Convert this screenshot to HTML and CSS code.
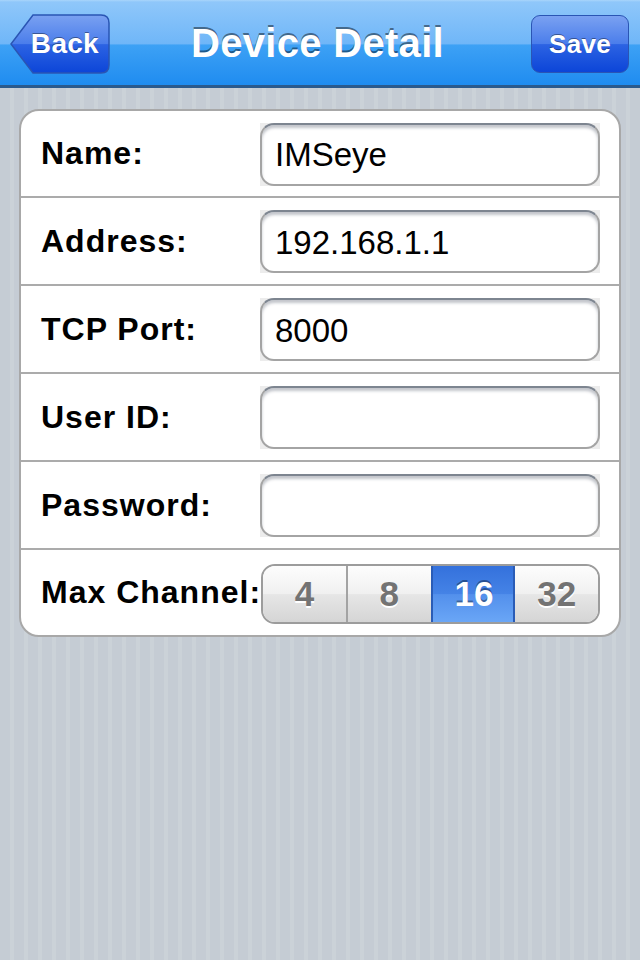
FILE: index.html
```html
<!DOCTYPE html>
<html lang="en">
<head>
    <meta charset="UTF-8">
    <meta name="viewport" content="width=device-width, initial-scale=1.0">
    <title>Device Detail</title>
    <link rel="stylesheet" href="styles.css">
</head>
<body>
    <header class="navbar">
        <button class="nav-btn back-btn">
            <svg class="back-shape" viewBox="0 0 100 60" width="100" height="60">
                <defs>
                    <linearGradient id="backGrad" x1="0" y1="0" x2="0" y2="1">
                        <stop offset="0" stop-color="#7aa1f1"/>
                        <stop offset="0.5" stop-color="#4a7deb"/>
                        <stop offset="0.51" stop-color="#2c63e3"/>
                        <stop offset="1" stop-color="#0c45d8"/>
                    </linearGradient>
                </defs>
                <path d="M23 1 H91 Q99 1 99 9 V51 Q99 59 91 59 H23 L1 30 Z" fill="url(#backGrad)" stroke="#2a55b4" stroke-width="1.5"/>
            </svg>
            <span class="back-label">Back</span>
        </button>
        <h1 class="nav-title">Device Detail</h1>
        <button class="nav-btn save-btn">Save</button>
    </header>

    <main class="content">
        <div class="card">
            <div class="row">
                <label class="row-label" for="name">Name:</label>
                <div class="field"><input type="text" id="name" value="IMSeye"></div>
            </div>
            <div class="row">
                <label class="row-label" for="address">Address:</label>
                <div class="field"><input type="text" id="address" value="192.168.1.1"></div>
            </div>
            <div class="row">
                <label class="row-label" for="port">TCP Port:</label>
                <div class="field"><input type="text" id="port" value="8000"></div>
            </div>
            <div class="row">
                <label class="row-label" for="userId">User ID:</label>
                <div class="field"><input type="text" id="userId" value=""></div>
            </div>
            <div class="row">
                <label class="row-label" for="password">Password:</label>
                <div class="field"><input type="password" id="password" value=""></div>
            </div>
            <div class="row">
                <span class="row-label">Max Channel:</span>
                <div class="segmented">
                    <button class="segment">4</button>
                    <button class="segment">8</button>
                    <button class="segment selected">16</button>
                    <button class="segment">32</button>
                </div>
            </div>
        </div>
    </main>
</body>
</html>
```

FILE: styles.css
```css
* {
    margin: 0;
    padding: 0;
    box-sizing: border-box;
}

body {
    font-family: "Liberation Sans", Arial, sans-serif;
    background: repeating-linear-gradient(90deg, #c5ccd4 0, #c5ccd4 10px, #cbd2d8 10px, #cbd2d8 14px);
    min-height: 100vh;
}

/* Верхняя панель */
.navbar {
    height: 88px;
    display: flex;
    align-items: center;
    justify-content: space-between;
    padding: 0 11px 0 10px;
    background: linear-gradient(#a9d5fb 0, #8fc7fa 2px, #6fb6f8 50%, #3da1f5 51%, #1f8cf0 97%, #2b5a8c 97%, #2b5a8c 100%);
}

.nav-title {
    color: #fff;
    font-size: 40px;
    font-weight: bold;
    letter-spacing: 0.3px;
    text-shadow: 0 -2px 0 rgba(0, 0, 0, 0.45);
    margin: -2px 0 0 -6px;
}

.nav-btn {
    border: none;
    background: none;
    color: #fff;
    font-family: inherit;
    font-weight: bold;
    text-shadow: 0 -1px 0 rgba(0, 0, 0, 0.4);
    cursor: pointer;
}

.back-btn {
    display: grid;
    width: 100px;
    height: 60px;
    margin-top: -1px;
}

.back-shape,
.back-label {
    grid-area: 1 / 1;
}

.back-label {
    font-size: 28px;
    letter-spacing: 0.3px;
    align-self: center;
    justify-self: end;
    margin-right: 11px;
}

.save-btn {
    width: 98px;
    height: 58px;
    font-size: 26px;
    letter-spacing: 0.3px;
    border-radius: 9px;
    border: 1.5px solid #2a55b4;
    background: linear-gradient(#7aa1f1 0%, #4a7deb 50%, #2c63e3 51%, #0c45d8 100%);
}

/* Карточка с полями */
.content {
    padding: 21px 19px;
}

.card {
    background: #fff;
    border: 2px solid #a8a8a8;
    border-radius: 20px;
    overflow: hidden;
}

.row {
    height: 88px;
    display: flex;
    align-items: center;
    justify-content: space-between;
    padding: 0 19px 0 20px;
    border-top: 2px solid #ababab;
}

.row:first-child {
    height: 85px;
    border-top: none;
}

.row:last-child {
    height: 87px;
}

.row-label {
    font-size: 32px;
    font-weight: bold;
    letter-spacing: 1px;
    color: #000;
    white-space: nowrap;
}

.field {
    width: 340px;
    height: 63px;
    background: #ececec;
    margin-top: 1px;
}

.field input {
    width: 100%;
    height: 100%;
    border: 2px solid #a4a4a4;
    border-top-color: #7d8590;
    border-radius: 14px;
    background: #fff;
    box-shadow: inset 0 3px 3px rgba(80, 90, 105, 0.35);
    padding: 2px 0 0 13px;
    font-family: "Liberation Sans", Arial, sans-serif;
    font-size: 33px;
    color: #000;
    outline: none;
}

/* Сегменты */
.segmented {
    width: 340px;
    height: 60px;
    display: flex;
    border: 2px solid #9c9c9c;
    border-radius: 14px;
    overflow: hidden;
    margin-top: 2px;
}

.segment {
    flex: 1;
    border: none;
    border-left: 2px solid #a3a3a3;
    background: linear-gradient(#fdfdfd 0%, #f0f0f0 50%, #e6e6e6 51%, #d5d5d5 100%);
    font-family: inherit;
    font-size: 35px;
    font-weight: bold;
    color: #737373;
    text-shadow: 0 2px 0 #fff;
    cursor: pointer;
}

.segment:first-child {
    border-left: none;
}

.segment.selected {
    background: linear-gradient(#3471dc 0%, #4583e6 50%, #5390ec 51%, #6aa6f6 100%);
    color: #fff;
    text-shadow: 0 -2px 0 rgba(0, 0, 0, 0.35);
    border-left: 2px solid #2a5cb6;
    box-shadow: inset -2px 0 0 #2a5cb6;
}

.segment.selected + .segment {
    border-left: none;
}
```
